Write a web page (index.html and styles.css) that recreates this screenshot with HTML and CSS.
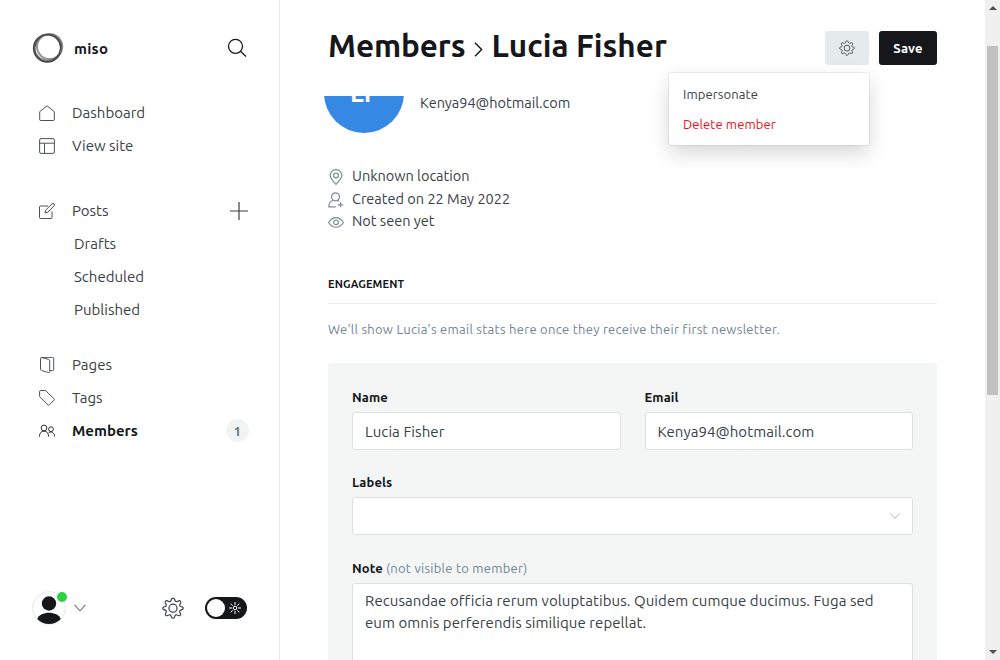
FILE: index.html
```html
<!DOCTYPE html>
<html lang="en">
<head>
<meta charset="utf-8">
<title>Members - miso</title>
<link rel="stylesheet" href="styles.css">
</head>
<body>
<svg class="sprite" width="0" height="0">
  <symbol id="gear" viewBox="0 0 24 24">
    <path d="M10.3 2.4 C10.9 .7 13.1 .7 13.7 2.4 L14.2 3.8 C14.6 5 15.7 5.4 16.7 4.9 L18.1 4.2 C19.7 3.5 21.1 5 20.3 6.5 L19.5 7.9 C19 9 19.5 10 20.6 10.4 L21.9 10.8 C23.6 11.3 23.6 13.2 21.9 13.8 L20.6 14.3 C19.5 14.7 19 15.7 19.5 16.8 L20.1 18 C20.9 19.6 19.5 21 17.9 20.2 L16.6 19.6 C15.6 19.1 14.6 19.5 14.2 20.6 L13.7 21.9 C13.1 23.6 10.9 23.6 10.3 21.9 L9.8 20.6 C9.4 19.5 8.4 19.1 7.4 19.6 L6.1 20.2 C4.5 21 3.1 19.6 3.9 18 L4.5 16.8 C5 15.7 4.5 14.7 3.4 14.3 L2.1 13.8 C.4 13.2 .4 11.3 2.1 10.8 L3.4 10.4 C4.5 10 5 9 4.5 7.9 L3.7 6.5 C2.9 5 4.3 3.5 5.9 4.2 L7.3 4.9 C8.3 5.4 9.4 5 9.8 3.8 Z"/>
    <circle cx="12" cy="12.2" r="4.4"/>
  </symbol>
</svg>
<div class="app">
  <aside class="sidebar">
    <header class="brand">
      <svg class="brand-logo" viewBox="0 0 32 32">
        <circle cx="17.6" cy="14.6" r="12.6" stroke="#999" stroke-width="2.2"/>
        <circle cx="15.300" cy="16.300" r="13.600" stroke="#444" stroke-width="1.700"/>
        <ellipse cx="16.600" cy="15.600" rx="13.700" ry="12.600" stroke="#666" stroke-width="1.100" transform="rotate(-35 16 16)"/>
        <ellipse cx="15.600" cy="16.200" rx="12.600" ry="13.800" stroke="#444" stroke-width=".7" transform="rotate(25 16 16)"/>
      </svg>
      <span class="brand-name">miso</span>
      <svg class="search" viewBox="0 0 20 20"><circle cx="8.5" cy="8.3" r="7"/><path d="M13.5 13.3 19 18.5"/></svg>
    </header>
    <nav class="nav">
      <ul class="nav-group">
        <li class="nav-item"><svg class="nav-icon" viewBox="0 0 16 16"><path d="M.7 6.7 8 .8l7.3 5.900v7.800a1 1 0 0 1-1 1H1.700a1 1 0 0 1-1-1z"/></svg><span>Dashboard</span></li>
        <li class="nav-item"><svg class="nav-icon" viewBox="0 0 16 16"><rect x=".6" y=".6" width="14.800" height="14.800" rx="1.500"/><path d="M.6 5.200h14.800M5.500 5.200v10.200"/></svg><span>View site</span></li>
      </ul>
      <ul class="nav-group nav-content">
        <li class="nav-item"><svg class="nav-icon" viewBox="0 0 16 16"><path d="M9 3H1.500a1 1 0 0 0-1 1v10.500a1 1 0 0 0 1 1H12a1 1 0 0 0 1-1V8.500M6 10l.8-3L13 .9a1.300 1.300 0 0 1 2 2L8.900 9.200z"/></svg><span>Posts</span><svg class="plus" viewBox="0 0 18 18"><path d="M9 0v18M0 9h18"/></svg></li>
        <li class="nav-item nav-sub">Drafts</li>
        <li class="nav-item nav-sub">Scheduled</li>
        <li class="nav-item nav-sub">Published</li>
      </ul>
      <ul class="nav-group">
        <li class="nav-item"><svg class="nav-icon" viewBox="0 0 16 16"><path d="M1.500 1.300a1 1 0 0 1 1-.9h11.200a1 1 0 0 1 1 1v11.200a1 1 0 0 1-1 1h-2.800M2.500.4l7 2a1.500 1.500 0 0 1 1.200 1.500v10.600a1 1 0 0 1-1.300 1l-7-2a1.300 1.300 0 0 1-.9-1.200v-11"/></svg><span>Pages</span></li>
        <li class="nav-item"><svg class="nav-icon" viewBox="0 0 16 16"><path d="M.6 1.500a1 1 0 0 1 1-1l5 .1 8.600 8.300a.7.700 0 0 1 0 1l-5 5.200a.7.700 0 0 1-1 0L.6 6.500z"/></svg><span>Tags</span></li>
        <li class="nav-item nav-active"><svg class="nav-icon" viewBox="0 0 16 16"><circle cx="5" cy="5" r="2.900"/><path d="M.3 13.700c.2-3.500 1.900-5.600 4.700-5.600s4.500 2.100 4.700 5.600"/><circle cx="12" cy="6.200" r="2.400"/><path d="M9.600 9.800c2.800-2 6 .1 6.100 3.900"/></svg><span>Members</span><span class="badge">1</span></li>
      </ul>
    </nav>
    <footer class="account">
      <div class="user">
        <svg class="user-picture" viewBox="0 0 34 34"><circle cx="17" cy="17" r="16.400" fill="#fff" stroke="#e5e7e9"/><circle cx="17" cy="12.500" r="7.200" fill="#15171a"/><path d="M5.200 28C8 19.500 26 19.500 28.800 28A16.400 16.400 0 0 1 5.200 28z" fill="#15171a"/></svg>
        <span class="status"></span>
      </div>
      <svg class="user-caret" viewBox="0 0 12 8"><path d="m.5.8 5.500 6 5.500-6"/></svg>
      <svg class="settings"><use href="#gear"/></svg>
      <div class="theme-toggle">
        <span class="knob"></span>
        <svg class="sun" viewBox="0 0 12 12"><circle cx="6" cy="6" r="1.800"/><path d="M6 0v3M6 9v3M0 6h3M9 6h3M1.700 1.700l2 2M8.300 8.300l2 2M10.300 1.700l-2 2M3.700 8.300l-2 2"/></svg>
      </div>
    </footer>
  </aside>
  <main class="main">
    <header class="page-header">
      <h1 class="title"><span>Members</span><svg class="title-sep" viewBox="0 0 9 15"><path d="m1 .8 6.600 6.700L1 14.200"/></svg><span>Lucia Fisher</span></h1>
      <div class="actions">
        <button class="btn-gear"><svg><use href="#gear"/></svg></button>
        <button class="btn-save">Save</button>
        <div class="menu"><a class="menu-item">Impersonate</a><a class="menu-item menu-danger">Delete member</a></div>
      </div>
    </header>
    <div class="viewport">
      <section class="profile">
        <div class="avatar">LF</div>
        <div class="profile-email">Kenya94@hotmail.com</div>
      </section>
      <ul class="facts">
        <li class="fact"><svg viewBox="0 0 16 16"><path d="M8 15.300C5 12.300 2.200 9.300 2.200 6.500a5.800 5.800 0 0 1 11.600 0c0 2.800-2.800 5.800-5.800 8.800z"/><circle cx="8" cy="6.500" r="2.400"/></svg><span>Unknown location</span></li>
        <li class="fact"><svg viewBox="0 0 16 16"><circle cx="7.500" cy="4.800" r="4"/><path d="M5 8.200C2.200 9.400.8 11.700.8 14.800h7M9.500 8.400l1.600.8M12.500 10.300v5M10 12.800h5.200"/></svg><span>Created on 22 May 2022</span></li>
        <li class="fact"><svg viewBox="0 0 16 16"><path d="M.6 8.500C4.500 1.900 11.500 1.900 15.400 8.500 11.500 14.800 4.500 14.800.6 8.500z"/><circle cx="8" cy="8.300" r="2.300"/></svg><span>Not seen yet</span></li>
      </ul>
      <h2 class="section-title">Engagement</h2>
      <p class="section-note">We'll show Lucia's email stats here once they receive their first newsletter.</p>
      <form class="panel">
        <div class="row">
          <div class="field"><label class="label">Name</label><div class="input">Lucia Fisher</div></div>
          <div class="field"><label class="label">Email</label><div class="input">Kenya94@hotmail.com</div></div>
        </div>
        <div class="field field-labels"><label class="label">Labels</label><div class="input select"><svg viewBox="0 0 10 6"><path d="m.4.5 4.600 4.800L9.600.5"/></svg></div></div>
        <div class="field"><label class="label">Note <span class="hint">(not visible to member)</span></label><div class="input textarea">Recusandae officia rerum voluptatibus. Quidem cumque ducimus. Fuga sed<br>eum omnis perferendis similique repellat.</div></div>
      </form>
    </div>
  </main>
  <div class="scrollbar"><span class="arrow arrow-up"></span><span class="thumb"></span><span class="arrow arrow-down"></span></div>
</div>
</body>
</html>
```
FILE: styles.css
```css
* { box-sizing: border-box; }
body {
  margin: 0;
  font-family: Ubuntu, "Noto Sans", sans-serif;
  font-size: 15px;
  color: #394047;
  background: #fff;
}
ul, h1, h2, p { margin: 0; padding: 0; list-style: none; }
svg { display: block; flex: none; fill: none; stroke: currentColor; }
.sprite { position: absolute; }
.app { display: flex; height: 660px; overflow: hidden; }

.sidebar {
  flex: none;
  width: 280px;
  display: flex;
  flex-direction: column;
  border-right: 1px solid #e5e9ed;
}
.brand { display: flex; align-items: center; height: 96px; padding: 0 32px; }
.brand-logo { width: 32px; height: 32px; }
.brand-name { margin-left: 10px; font-weight: 700; color: #15171a; letter-spacing: .25px; }
.search { width: 20px; height: 20px; margin-left: auto; color: #15171a; stroke-width: 1.3; }
.nav-content { margin: 32px 0 22px; }
.nav-item { display: flex; align-items: center; height: 33px; padding: 0 31px 0 39px; white-space: nowrap; }
.nav-icon { width: 16px; height: 16px; margin-right: 17px; stroke-width: .9; }
.nav-sub { padding-left: 74px; }
.nav-active { padding-right: 30px; font-weight: 700; color: #15171a; }
.plus { width: 18px; height: 18px; margin-left: auto; stroke-width: 1.2; }
.badge {
  display: grid;
  place-items: center;
  width: 23px;
  height: 23px;
  margin-left: auto;
  border-radius: 50%;
  background: #f1f3f5;
  color: #697785;
  font-size: 13px;
  font-weight: 600;
}
.account { display: flex; align-items: center; height: 50px; margin-top: auto; margin-bottom: 27px; padding: 0 32px; }
.user { position: relative; width: 34px; height: 34px; }
.user-picture { width: 34px; height: 34px; stroke: none; }
.status { position: absolute; top: 1px; right: -1px; width: 10px; height: 10px; border-radius: 50%; background: #30cf43; }
.user-caret { width: 12px; height: 8px; margin-left: 8px; }
.settings { width: 22px; height: 22px; margin-left: 76px; stroke-width: 1.3; }
.theme-toggle {
  display: flex;
  align-items: center;
  justify-content: space-between;
  width: 42px;
  height: 22px;
  margin-left: 21px;
  padding: 0 6px 0 2px;
  border-radius: 11px;
  background: #15171a;
}
.knob { width: 18px; height: 18px; border-radius: 50%; background: #fff; }
.sun { width: 12px; height: 12px; color: #fff; stroke-width: 1; }

.main { flex: none; width: 705px; display: flex; flex-direction: column; }
.page-header { flex: none; display: flex; justify-content: space-between; height: 96px; padding: 31px 48px 0; }
.title { display: flex; align-items: center; height: 28px; font-size: 31.5px; font-weight: 700; color: #15171a; white-space: nowrap; }
.title span:first-child { letter-spacing: -.1px; }
.title-sep { width: 9px; height: 15px; margin: 8px 8px 0 9px; stroke-width: 1.4; }
.actions { position: relative; display: flex; gap: 10px; height: 34px; }
button { display: grid; place-items: center; padding: 0; border: 0; border-radius: 3px; font-family: inherit; }
.btn-gear { width: 44px; height: 34px; background: #e5eaed; color: #394047; }
.btn-gear svg { width: 16px; height: 16px; stroke-width: 1.3; }
.btn-save { width: 58px; height: 34px; background: #15171a; color: #fff; font-size: 13px; font-weight: 600; letter-spacing: .2px; }
.menu {
  position: absolute;
  z-index: 2;
  top: 42px;
  right: 68px;
  width: 200px;
  height: 72px;
  padding: 6px 14px;
  border-radius: 3px;
  background: #fff;
  box-shadow: 0 0 0 1px rgba(0,0,0,.06), 0 8px 20px rgba(0,0,0,.16);
}
.menu-item { display: block; width: max-content; font-size: 13px; line-height: 30px; white-space: nowrap; letter-spacing: .1px; }
.menu-danger { color: #f50b23; }

.viewport { height: 564px; padding: 0 48px; overflow: hidden; }
.profile { display: flex; height: 37px; margin-left: -4px; }
.avatar { display: grid; place-items: center; width: 80px; height: 80px; margin-top: -43px; border-radius: 50%; background: #3588e3; color: #fff; font-size: 25px; font-weight: 600; }
.profile-email { margin-left: 16px; line-height: 14px; font-size: 14.5px; }
.facts { margin-top: 32px; }
.fact { display: flex; align-items: center; height: 22.700px; font-size: 14.500px; }
.fact > span { margin-top: -2px; white-space: nowrap; }
.fact svg { margin-top: 1px; width: 16px; height: 16px; margin-right: 8px; color: #7c8b9a; stroke-width: 1.2; }
.section-title { height: 39px; margin-top: 32px; border-bottom: 1px solid #ebeced; font-size: 11px; font-weight: 600; line-height: 38px; text-transform: uppercase; color: #15171a; letter-spacing: .1px; }
.section-note { margin-top: 15px; line-height: 20px; font-size: 13px; color: #738496; white-space: nowrap; letter-spacing: .27px; }
.panel { height: 400px; margin-top: 24px; padding: 24px; border-radius: 3px; background: #f4f6f6; }
.row { display: grid; grid-template-columns: 1fr 1fr; gap: 24px; }
.field { height: 85px; }
.field-labels { height: 86px; }
.label { display: block; height: 25px; line-height: 21px; font-size: 13px; font-weight: 600; color: #15171a; letter-spacing: .1px; }
.hint { font-weight: 400; color: #738496; letter-spacing: .25px; }
.input { display: flex; align-items: center; height: 38px; padding: 0 12px; border: 1px solid #dddfe0; border-radius: 3px; background: #fff; font-size: 15px; letter-spacing: .07px; }
.select { justify-content: flex-end; }
.select svg { width: 10px; height: 6px; color: #abb4be; }
.textarea { display: block; height: 120px; padding-top: 6px; line-height: 22px; white-space: nowrap; }

.scrollbar { width: 15px; display: flex; flex-direction: column; align-items: center; background: #f0f0f0; }
.arrow { border: 4px solid transparent; }
.arrow-up { margin-top: 2px; border-bottom-color: #505050; }
.thumb { width: 11px; height: 349px; margin-top: 36px; background: #c1c1c1; }
.arrow-down { margin-top: auto; margin-bottom: 2px; border-top-color: #505050; }
```
